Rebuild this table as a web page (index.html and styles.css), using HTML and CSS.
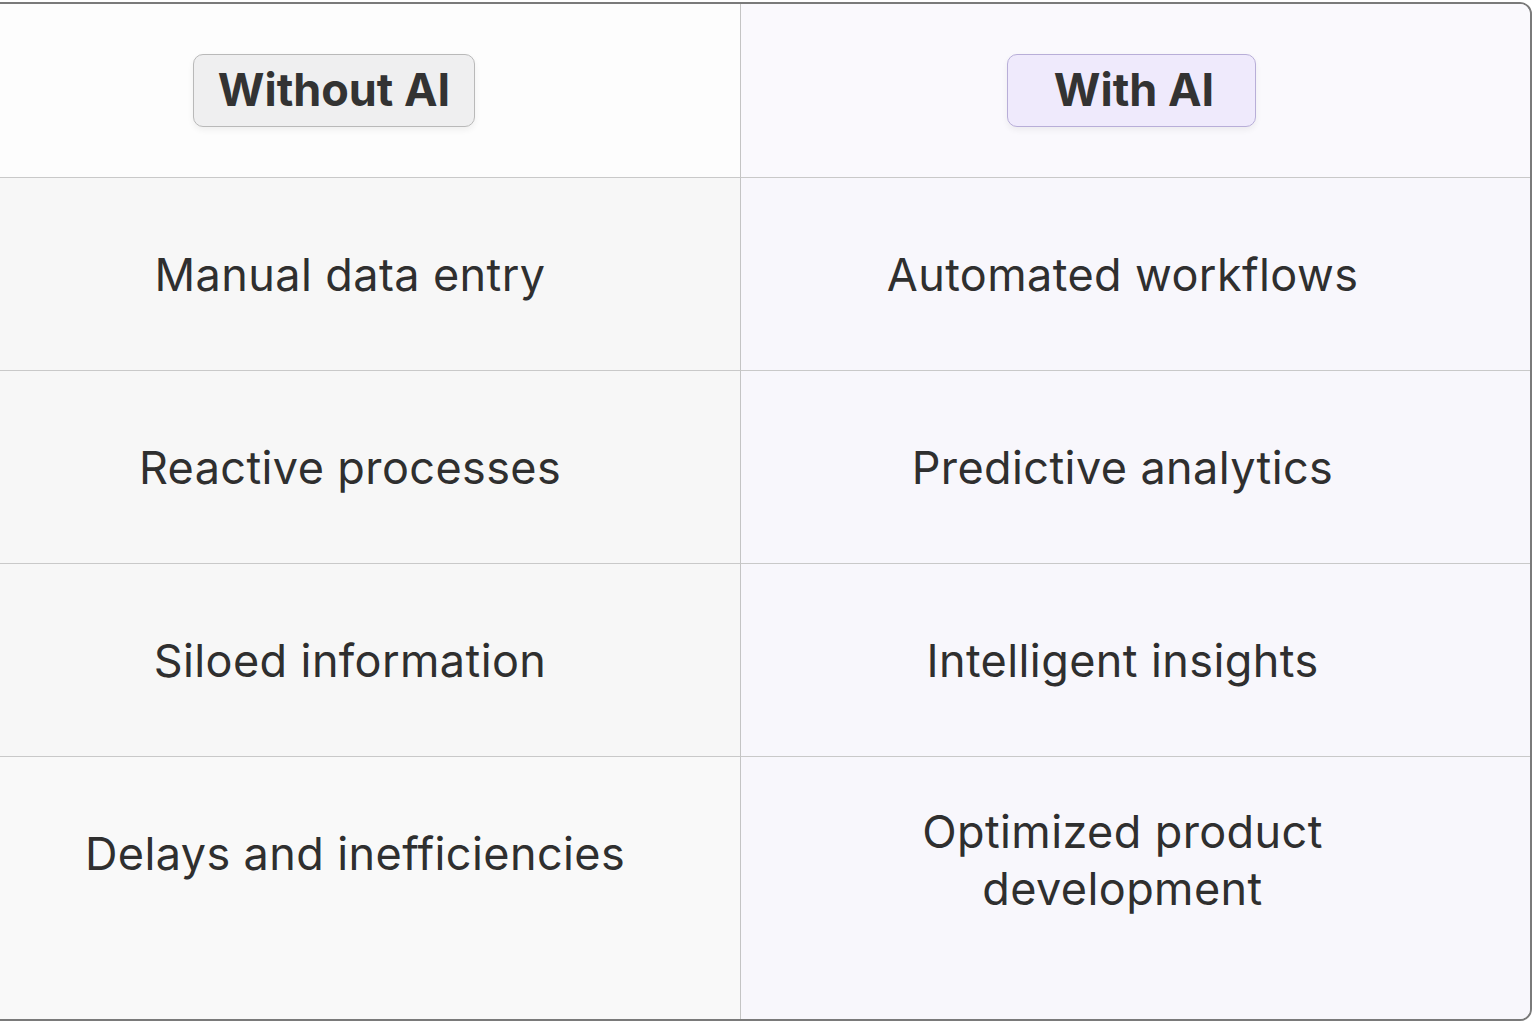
FILE: index.html
```html
<!DOCTYPE html>
<html lang="en">
<head>
<meta charset="utf-8">
<title>Without AI vs With AI</title>
<link rel="stylesheet" href="styles.css">
</head>
<body>
<div class="compare">
  <div class="cell head left"><span class="badge badge-plain">Without AI</span></div>
  <div class="cell head right"><span class="badge badge-ai">With AI</span></div>

  <div class="cell left">Manual data entry</div>
  <div class="cell right">Automated workflows</div>

  <div class="cell left">Reactive processes</div>
  <div class="cell right">Predictive analytics</div>

  <div class="cell left">Siloed information</div>
  <div class="cell right">Intelligent insights</div>

  <div class="cell left last">Delays and inefficiencies</div>
  <div class="cell right last">Optimized product<br>development</div>
</div>
</body>
</html>
```

FILE: styles.css
```css
html, body {
  margin: 0;
  padding: 0;
  background: #ffffff;
  overflow: hidden;
}

.compare {
  box-sizing: border-box;
  display: grid;
  grid-template-columns: 789px 1fr;
  grid-template-rows: 174px 193px 193px 193px 1fr;
  width: 1582px;
  height: 1019px;
  margin: 2px 0 0 -50px;
  border: 2px solid #7a7a7a;
  border-radius: 12px;
  overflow: hidden;
  font-family: "Inter", "Liberation Sans", sans-serif;
  color: #2f2f2f;
}

.cell {
  display: flex;
  align-items: center;
  justify-content: center;
  text-align: center;
  font-size: 45px;
  line-height: 57px;
  letter-spacing: 0.4px;
  border-bottom: 1px solid #c9c9c9;
}

.left {
  background: #f7f7f7;
  border-right: 1px solid #c4c4c4;
  padding-left: 8px;
}

.right {
  background: #f8f7fc;
  padding-right: 26px;
}

.head.left {
  background: #fdfdfd;
  padding-left: 0;
  padding-right: 24px;
}
.head.right {
  background: #faf9fd;
  padding-right: 8px;
}

.last {
  border-bottom: none;
  align-items: flex-start;
}
.left.last {
  background: #f9f9f9;
  padding-top: 68px;
  padding-left: 18px;
}
.right.last {
  padding-top: 46px;
}

.badge {
  display: inline-block;
  font-size: 45px;
  font-weight: 700;
  letter-spacing: 0;
  line-height: 52px;
  padding: 9px 24px 10px;
  border-radius: 10px;
  color: #333333;
  box-shadow: 0 3px 6px rgba(0, 0, 0, 0.06);
}

.badge-plain {
  background: #efeff0;
  border: 1.5px solid #b9b9b9;
}

.badge-ai {
  background: #efeafc;
  border: 1.5px solid #b8aed8;
  padding-left: 46px;
  padding-right: 41px;
}
```
